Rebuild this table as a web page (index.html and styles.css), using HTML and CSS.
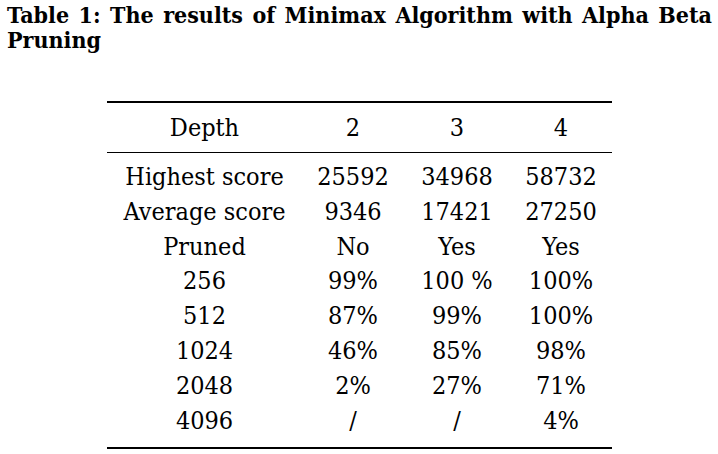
FILE: index.html
```html
<!DOCTYPE html>
<html>
<head>
<meta charset="utf-8">
<link rel="stylesheet" href="styles.css">
</head>
<body>
<p class="caption">Table 1: The results of Minimax Algorithm with Alpha Beta Pruning</p>
<table class="results">
  <colgroup>
    <col class="c1"><col class="c2"><col class="c3"><col class="c4">
  </colgroup>
  <thead>
    <tr><th>Depth</th><th>2</th><th>3</th><th>4</th></tr>
  </thead>
  <tbody>
    <tr class="first"><td>Highest score</td><td>25592</td><td>34968</td><td>58732</td></tr>
    <tr><td>Average score</td><td>9346</td><td>17421</td><td>27250</td></tr>
    <tr><td>Pruned</td><td>No</td><td>Yes</td><td>Yes</td></tr>
    <tr><td>256</td><td>99%</td><td>100 %</td><td>100%</td></tr>
    <tr><td>512</td><td>87%</td><td>99%</td><td>100%</td></tr>
    <tr><td>1024</td><td>46%</td><td>85%</td><td>98%</td></tr>
    <tr><td>2048</td><td>2%</td><td>27%</td><td>71%</td></tr>
    <tr class="last"><td>4096</td><td>/</td><td>/</td><td>4%</td></tr>
  </tbody>
</table>
</body>
</html>
```
FILE: styles.css
```css
html, body {
  margin: 0;
  padding: 0;
  background: #fff;
  color: #000;
}

.caption {
  font-family: "DejaVu Serif Condensed", "DejaVu Serif", serif;
  font-stretch: condensed;
  margin: 0;
  padding: 2px 6px 0 7px;
  font-size: 23px;
  line-height: 25px;
  font-weight: bold;
  text-align: justify;
  text-align-last: left;
}

.results {
  font-family: "DejaVu Serif Condensed", "DejaVu Serif", serif;
  font-stretch: condensed;
  margin: 49px 0 0 107px;
  width: 505px;
  table-layout: fixed;
  border-collapse: separate;
  border-spacing: 0;
  border-top: 2px solid #000;
  border-bottom: 2px solid #000;
  font-size: 25px;
}

.c1 { width: 195px; }
.c2 { width: 102px; }
.c3 { width: 106px; }
.c4 { width: 102px; }

.results th,
.results td {
  font-family: inherit;
  padding: 0;
  text-align: center;
  font-weight: normal;
  line-height: 34.86px;
  white-space: nowrap;
}

.results thead th {
  padding: 8px 0 6px;
  border-bottom: 1px solid #000;
}

.results tr.first td {
  padding-top: 7px;
}

.results tr.last td {
  padding-bottom: 8px;
}
```
